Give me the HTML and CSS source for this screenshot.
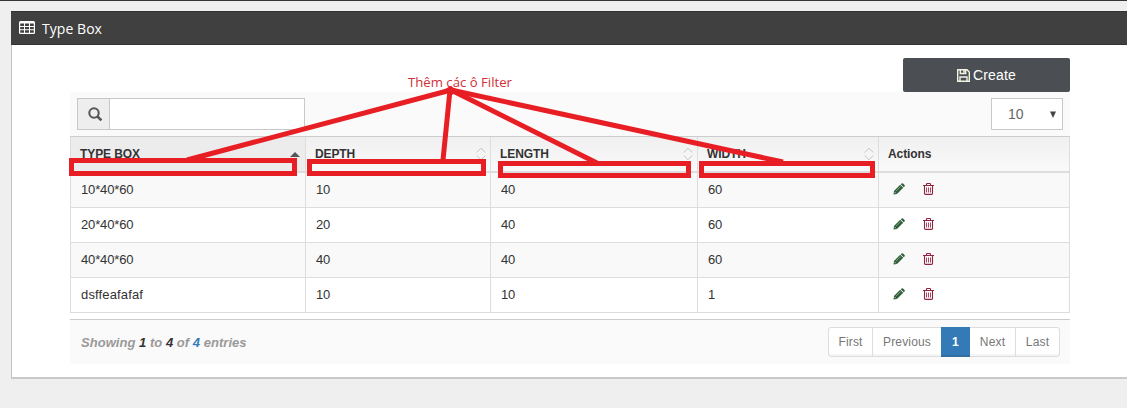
FILE: index.html
```html
<!DOCTYPE html>
<html lang="en">
<head>
<meta charset="utf-8">
<title>Type Box</title>
<link rel="stylesheet" href="styles.css">
</head>
<body>
<svg class="defs" width="0" height="0" aria-hidden="true">
  <symbol id="pencil" viewBox="0 0 12 12"><path fill="#2f5d3a" d="M.5 11.5 1 8 7.2 1.8 10.2 4.8 4 11ZM7.8 1.2 8.6.5Q9.3-.1 10 .5L11.5 2Q12.1 2.7 11.5 3.4L10.8 4.2Z"/><path d="M3 8.2 7.8 3.4" stroke="#8db184" stroke-width=".9"/><path d="M1.7 9.2 2.8 10.3" stroke="#e8efe6" stroke-width=".9"/></symbol>
  <symbol id="trash" viewBox="0 0 11 12"><path fill="none" stroke="#8f2442" stroke-width="1.1" d="M0 2.5H11M3.5 2.5V1.2Q3.5.5 4.2.5H6.8Q7.5.5 7.5 1.2V2.5M1.5 2.5V10.5Q1.5 11.4 2.4 11.4H8.6Q9.5 11.4 9.5 10.5V2.5"/><path stroke="#a8475f" d="M3.5 4.5V9.5M5.5 4.5V9.5M7.5 4.5V9.5"/></symbol>
  <symbol id="sort" viewBox="0 0 10 14"><path fill="none" stroke="#c4c4c4" d="M.7 5.5 5 1.2 9.3 5.5M.7 8.5 5 12.8 9.3 8.5"/></symbol>
</svg>
<section class="panel">
  <header class="panel-head">
    <svg width="16" height="13" viewBox="0 0 16 13"><rect width="16" height="13" rx="1.5" fill="#fff"/><path fill="#404040" d="M1.2 2.5H5V5H1.2zM6 2.5h4V5H6zM11 2.5h3.8V5H11zM1.2 6H5v2.3H1.2zM6 6h4v2.3H6zM11 6h3.8v2.3H11zM1.2 9.3H5v2.5H1.2zM6 9.3h4v2.5H6zM11 9.3h3.8v2.5H11z"/></svg>
    <span>Type Box</span>
  </header>
  <div class="content">
    <div class="actions">
      <button class="create"><svg width="13" height="13" viewBox="0 0 13 13"><path fill="none" stroke="#f3f3e2" stroke-width="1.4" d="M.7.7H10L12.3 3V12.3H.7ZM3 12V8h7v4M3.3 1V4.5H8.7V1"/><path fill="#f3f3e2" d="M6.2 1h1.6v2.7H6.2z"/></svg><span>Create</span></button>
    </div>
    <div class="toolbar">
      <div class="search"><span class="search-icon"><svg width="15" height="15" viewBox="0 0 15 15" fill="none" stroke="#555"><circle cx="6" cy="6" r="4.7" stroke-width="2"/><path d="M9.5 9.5 13.4 13.4" stroke-width="2.5"/></svg></span><input class="search-input" type="text" aria-label="Search"></div>
      <div class="length"><span>10</span><svg width="6" height="7" viewBox="0 0 6 7"><path d="M0 .5H6L3 7Z" fill="#444"/></svg></div>
    </div>
    <div class="row head">
      <div class="sorted"><span>TYPE BOX</span><svg class="asc" width="10" height="5" viewBox="0 0 10 5"><path d="M0 5 5 0 10 5Z" fill="#555"/></svg></div>
      <div><span>DEPTH</span><svg width="10" height="14"><use href="#sort"/></svg></div>
      <div><span>LENGTH</span><svg width="10" height="14"><use href="#sort"/></svg></div>
      <div><span>WIDTH</span><svg width="10" height="14"><use href="#sort"/></svg></div>
      <div><span class="th-actions">Actions</span></div>
    </div>
    <div class="row odd"><div>10*40*60</div><div>10</div><div>40</div><div>60</div><div class="icons"><svg width="12" height="12"><use href="#pencil"/></svg><svg width="11" height="12"><use href="#trash"/></svg></div></div>
    <div class="row"><div>20*40*60</div><div>20</div><div>40</div><div>60</div><div class="icons"><svg width="12" height="12"><use href="#pencil"/></svg><svg width="11" height="12"><use href="#trash"/></svg></div></div>
    <div class="row odd"><div>40*40*60</div><div>40</div><div>40</div><div>60</div><div class="icons"><svg width="12" height="12"><use href="#pencil"/></svg><svg width="11" height="12"><use href="#trash"/></svg></div></div>
    <div class="row"><div class="wide">dsffeafafaf</div><div>10</div><div>10</div><div>1</div><div class="icons"><svg width="12" height="12"><use href="#pencil"/></svg><svg width="11" height="12"><use href="#trash"/></svg></div></div>
    <footer class="foot">
      <div class="info">Showing <b>1</b> to <b>4</b> of <b class="total">4</b> entries</div>
      <div class="pages"><span class="p-first">First</span><span class="p-prev">Previous</span><span class="current">1</span><span class="p-next">Next</span><span class="p-last">Last</span></div>
    </footer>
  </div>
</section>
<svg class="notes" width="1127" height="408" viewBox="0 0 1127 408" fill="none" stroke="#e81e25">
  <g stroke-width="5"><path d="M451 90 187 160"/><path d="M450 90 443 160"/><path d="M451 90 597 163"/><path d="M451 90 783 162"/></g>
  <path fill="#e81e25" stroke="none" d="M444 90 450 86 458 90 452 95Z"/>
  <g stroke-width="5" shape-rendering="crispEdges"><rect x="71.5" y="160.5" width="223" height="13"/><rect x="309.5" y="161.5" width="174" height="12"/><rect x="500.5" y="163.5" width="188" height="12"/><rect x="701.5" y="163.5" width="171" height="12"/></g>
  <text class="note-text" x="408" y="87" textLength="104" lengthAdjust="spacingAndGlyphs">Thêm các ô Filter</text>
</svg>
</body>
</html>
```
FILE: styles.css
```css
* { box-sizing: border-box; }
body {
  margin: 0;
  height: 408px;
  overflow: hidden;
  position: relative;
  padding: 10px 0 0 11px;
  border-top: 1px solid #373435;
  background: #efefef;
  font-family: "Liberation Sans", Arial, sans-serif;
  font-size: 13px;
  color: #333;
}
svg { display: block; flex: none; }
.defs { position: absolute; }
.panel {
  height: 368px;
  background: #fff;
  border-left: 1px solid #c4c4c4;
  border-bottom: 2px solid #c9c9c9;
}
.panel-head {
  height: 34px;
  margin-left: -1px;
  padding: 0 0 0 8px;
  display: flex;
  align-items: center;
  gap: 7px;
  background: #404040;
  border-top: 1px solid #333;
  border-bottom: 1px solid #333;
  color: #fff;
  font: 14px "Open Sans", sans-serif;
}
.panel-head svg { margin-bottom: 2px; }
.panel-head span { margin-top: 1px; letter-spacing: .05px; }
.content { width: 1000px; margin-left: 58px; padding-top: 13px; }
.actions { display: flex; justify-content: flex-end; }
.create {
  width: 167px;
  height: 34px;
  padding: 0;
  border: 0;
  border-radius: 2px;
  background: #4b4f54;
  color: #fff;
  display: flex;
  align-items: center;
  justify-content: center;
  gap: 3px;
  font: 14px "Liberation Sans", Arial, sans-serif;
}
.create span { letter-spacing: .15px; }
.toolbar {
  height: 44px;
  padding: 6px 7px;
  display: flex;
  justify-content: space-between;
  background: #fafafa;
}
.search { display: flex; width: 228px; height: 32px; border: 1px solid #c8c8c8; }
.search-icon {
  width: 32px;
  padding: 1px 0 0 3px;
  display: flex;
  align-items: center;
  justify-content: center;
  background: #eee;
  border-right: 1px solid #c8c8c8;
}
.search-input { flex: 1; min-width: 0; border: 0; background: #fff; }
.length {
  width: 72px;
  height: 32px;
  padding: 0 6px 0 16px;
  display: flex;
  align-items: center;
  justify-content: space-between;
  background: #fff;
  border: 1px solid #c8c8c8;
  color: #666;
  font-size: 14px;
}
.row {
  height: 35px;
  display: grid;
  grid-template-columns: 236px 185px 207px 181px 191px;
  background: #fff;
}
.row > div {
  padding: 0 0 1px 10px;
  display: flex;
  align-items: center;
  border-right: 1px solid #ddd;
  border-bottom: 1px solid #ddd;
  letter-spacing: -.15px;
}
.row > div:first-child { border-left: 1px solid #ddd; }
.row > .wide { letter-spacing: .15px; }
.odd { background: #f9f9f9; }
.head {
  height: 37px;
  border-top: 1px solid #ccc;
  background: linear-gradient(#f0f0f0, #fafafa);
  font-size: 12px;
  font-weight: bold;
}
.head > div {
  padding: 0 4px 0 9px;
  justify-content: space-between;
  border-bottom: 2px solid #ddd;
  letter-spacing: -.1px;
}
.head .sorted { background: #ececec; }
.sorted .asc { margin-right: 1px; }
.row .icons { padding: 0 0 2px 14px; gap: 18px; }
.foot {
  height: 45px;
  margin-top: 6px;
  padding: 0 10px 0 11px;
  display: flex;
  align-items: center;
  justify-content: space-between;
  background: #fafafa;
  border-top: 1px solid #ccc;
}
.info { color: #999; font-weight: bold; font-style: italic; letter-spacing: .03px; }
.info b { color: #333; }
.info .total { color: #337ab7; }
.pages {
  width: 232px;
  height: 30px;
  display: flex;
  border: 1px solid #ddd;
  border-radius: 3px;
  background: #fff;
  box-shadow: inset 0 -2px #f5f5f5;
  color: #777;
  font-size: 12px;
  letter-spacing: .15px;
}
.pages span {
  display: flex;
  align-items: center;
  justify-content: center;
  border-right: 1px solid #ddd;
}
.p-first { width: 44px; }
.p-prev { width: 68px; }
.pages .current {
  width: 29px;
  margin: -1px 0;
  padding-top: 2px;
  border: 0;
  border-bottom: 2px solid #346da0;
  background: #337ab7;
  color: #fff;
  font-weight: bold;
}
.p-next { width: 46px; }
.pages .p-last { flex: 1; border: 0; }
.pages .p-prev { border: 0; }
.notes { position: absolute; left: 0; top: -1px; pointer-events: none; }
.note-text { font: 13px "Open Sans", sans-serif; fill: #cf3038; stroke: none; }
```
